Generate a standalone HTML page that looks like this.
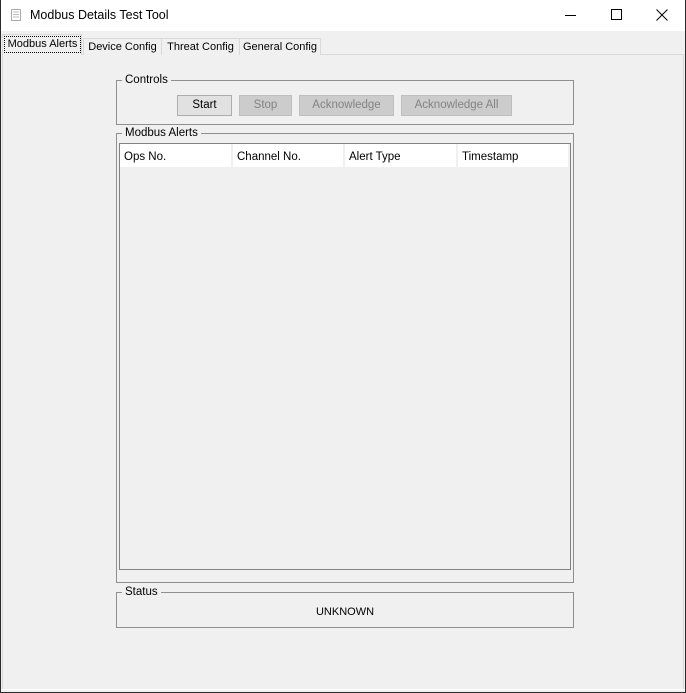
<!DOCTYPE html>
<html><head><style>
*{margin:0;padding:0;box-sizing:border-box}
body{width:686px;height:693px;background:#f0f0f0;font-family:"Liberation Sans",sans-serif;font-size:11.5px;color:#000;position:relative;overflow:hidden}
.a{position:absolute;white-space:nowrap}
.gb{position:absolute;border:1px solid #8f8f8f}
.gl{position:absolute;background:#f0f0f0;padding:0 3px;top:-8px;left:5px;line-height:14px;white-space:nowrap}
.btn{position:absolute;top:95px;height:21px;border:1px solid #adadad;background:#e1e1e1;text-align:center;line-height:19px;white-space:nowrap}
.dis{background:#cccccc;border-color:#bfbfbf;color:#838383}
.th{position:absolute;top:144px;height:23px;background:#fff;line-height:26px;padding-left:4px;white-space:nowrap}
.tab{position:absolute;top:38px;height:17px;border:1px solid #d9d9d9;border-bottom:none;background:#f0f0f0;line-height:16px;text-align:center;white-space:nowrap;font-size:11px}
</style></head><body>
<div class="a" style="left:0;top:0;width:686px;height:693px;border:1px solid #2b2b2b;border-top:none"></div>
<div class="a" style="left:1px;top:0;width:684px;height:31px;background:#fff"></div>
<svg class="a" style="left:9px;top:8px" width="14" height="14" viewBox="0 0 14 14"><rect x="2.5" y="1.5" width="9" height="11" fill="none" stroke="#aaa"/><path d="M4 4h6M4 6.5h6M4 9h6" stroke="#bbb"/></svg>
<div class="a" style="left:30px;top:8px;font-size:12.5px">Modbus Details Test Tool</div>
<div class="a" style="left:565px;top:15px;width:11px;height:1px;background:#000"></div>
<div class="a" style="left:611px;top:9px;width:11px;height:11px;border:1px solid #000"></div>
<svg class="a" style="left:656px;top:9px" width="12" height="12"><path d="M0.5 0.5L11.5 11.5M11.5 0.5L0.5 11.5" stroke="#000"/></svg>
<div class="a" style="left:2px;top:54px;width:682px;height:636px;border:1px solid #d9d9d9;background:#f0f0f0"></div>
<div class="a" style="left:1px;top:689px;width:684px;height:1px;background:#fff"></div>
<div class="tab" style="left:83px;width:79px">Device Config</div>
<div class="tab" style="left:161px;width:79px">Threat Config</div>
<div class="tab" style="left:239px;width:82px">General Config</div>
<div class="a" style="left:2px;top:34px;width:80px;height:21px;background:#f0f0f0;border:1px solid #d9d9d9;border-bottom:none"></div>
<div class="a" style="left:4px;top:36px;width:77px;height:17px;border:1px dotted #000;line-height:15px;text-align:center;font-size:11px">Modbus Alerts</div>

<div class="gb" style="left:116px;top:80px;width:458px;height:45px"><span class="gl">Controls</span></div>
<div class="btn" style="left:177px;width:55px">Start</div>
<div class="btn dis" style="left:239px;width:53px">Stop</div>
<div class="btn dis" style="left:299px;width:95px">Acknowledge</div>
<div class="btn dis" style="left:401px;width:111px">Acknowledge All</div>

<div class="gb" style="left:116px;top:133px;width:458px;height:450px"><span class="gl">Modbus Alerts</span></div>
<div class="a" style="left:119px;top:143px;width:452px;height:427px;border:1px solid #828282;background:#f0f0f0"></div>
<div class="th" style="left:120px;width:111px">Ops No.</div>
<div class="th" style="left:233px;width:110px">Channel No.</div>
<div class="th" style="left:345px;width:111px">Alert Type</div>
<div class="th" style="left:458px;width:110px">Timestamp</div>

<div class="gb" style="left:116px;top:592px;width:458px;height:36px"><span class="gl">Status</span></div>
<div class="a" style="left:116px;top:606px;width:458px;text-align:center;font-size:11px">UNKNOWN</div>
</body></html>
